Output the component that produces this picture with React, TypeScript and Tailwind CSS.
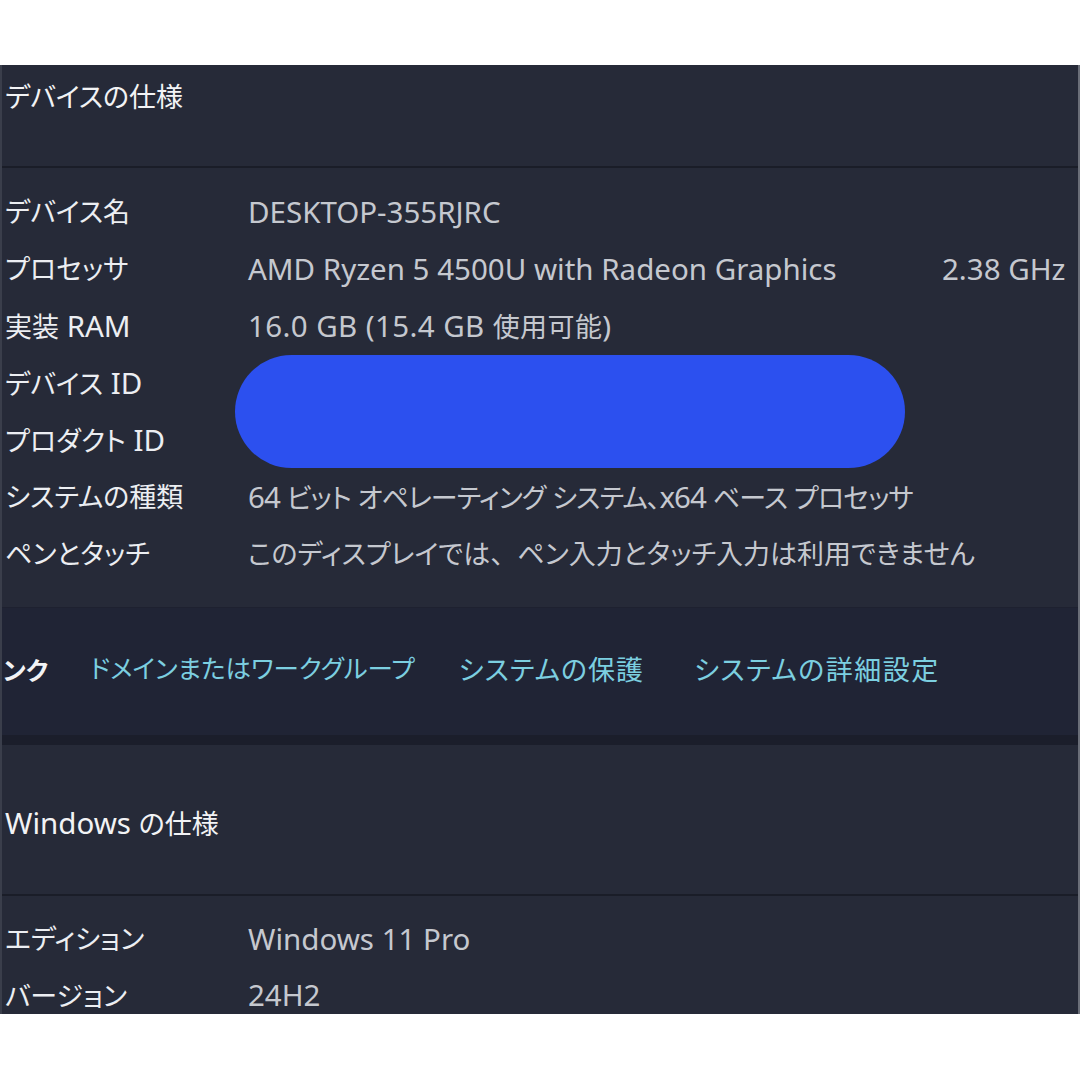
import React from "react";

type RowDef = { l: string; v: string; e?: string; vc?: string };

const rowsDevice: RowDef[] = [
  { l: "デバイス名", v: "DESKTOP-355RJRC" },
  { l: "プロセッサ", v: "AMD Ryzen 5 4500U with Radeon Graphics", e: "2.38 GHz" },
  { l: "実装 RAM", v: "16.0 GB (15.4 GB 使用可能)", vc: "tracking-[0.4px]" },
  { l: "デバイス ID", v: "" },
  { l: "プロダクト ID", v: "" },
  { l: "システムの種類", v: "64 ビット オペレーティング システム、x64 ベース プロセッサ", vc: "tracking-[-0.9px]" },
  { l: "ペンとタッチ", v: "このディスプレイでは、ペン入力とタッチ入力は利用できません" },
];

function Mixed({ text, fullComma = true }: { text: string; fullComma?: boolean }) {
  const parts = text.split(/([\x20-\x7E]+|、)/).filter((p) => p.length > 0);
  return (
    <>
      {parts.map((p, i) =>
        /^[\x20-\x7E]+$/.test(p) ? (
          <span key={i} className="text-[29.5px]">{p}</span>
        ) : p === "、" && fullComma ? (
          <span key={i} className="text-[27px] [font-feature-settings:normal]">{p}</span>
        ) : (
          <span key={i} className="text-[27px]">{p}</span>
        )
      )}
    </>
  );
}

function Row({ r, h = "h-[57px]" }: { r: RowDef; h?: string }) {
  return (
    <div className={`flex items-center whitespace-nowrap ${h}`}>
      <div className="w-[243px] shrink-0 text-[#eceef2]"><Mixed text={r.l} /></div>
      <div className={`w-[694px] shrink-0 text-[#c5c8cf] ${r.vc ?? ""}`}>
        <Mixed text={r.v} fullComma={!r.vc} />
      </div>
      {r.e && <div className="text-[#c5c8cf]"><Mixed text={r.e} /></div>}
    </div>
  );
}

export default function App() {
  return (
    <div className="w-[1080px] h-[1080px] bg-white pt-[65px] font-['Noto_Sans','Noto_Sans_CJK_JP',sans-serif] text-[27px] leading-none [font-feature-settings:'palt']">
      <div className="relative h-[949px] bg-[#262a38] border-l-2 border-l-[#3a3e4b] border-r-2 border-r-[#6a6e78] overflow-hidden pl-[3px]">
        <div className="h-[101px] pt-[17px] text-[#f2f3f5]">
          <div className="h-[28px] flex items-center">デバイスの仕様</div>
        </div>
        <div className="h-[2px] bg-[#1a1d28] -ml-[3px]" />
        <div className="pt-[15px] pb-[25px]">
          {rowsDevice.map((r) => (
            <Row key={r.l} r={r} />
          ))}
        </div>
        <div className="-ml-[3px] h-[128px] bg-[#202435] flex items-center whitespace-nowrap border-t border-t-[#1e2130] pb-[5px]">
          <div className="w-[88px] shrink-0 pl-[1px]">
            <span className="text-[#f2f3f5] font-semibold text-[25px]">ンク</span>
          </div>
          <div className="text-[#7ccfe0] text-[25.5px]">ドメインまたはワークグループ</div>
          <div className="text-[#7ccfe0] ml-[44px] tracking-[1px]">システムの保護</div>
          <div className="text-[#7ccfe0] ml-[50px] tracking-[1.5px]">システムの詳細設定</div>
        </div>
        <div className="-ml-[3px] h-[10px] bg-[#1b1e2b]" />
        <div className="h-[149px] flex items-center text-[#f2f3f5]">
          <div className="mt-[7px]"><Mixed text="Windows の仕様" /></div>
        </div>
        <div className="h-[2px] bg-[#1a1d28] -ml-[3px]" />
        <div className="pt-[14px]">
          <Row r={{ l: "エディション", v: "Windows 11 Pro" }} />
          <Row r={{ l: "バージョン", v: "24H2" }} h="h-[46px] pt-[10px]" />
        </div>
        <div className="absolute left-[233px] top-[290px] w-[670px] h-[113px] rounded-full bg-[#2c50ef]" />
      </div>
    </div>
  );
}
